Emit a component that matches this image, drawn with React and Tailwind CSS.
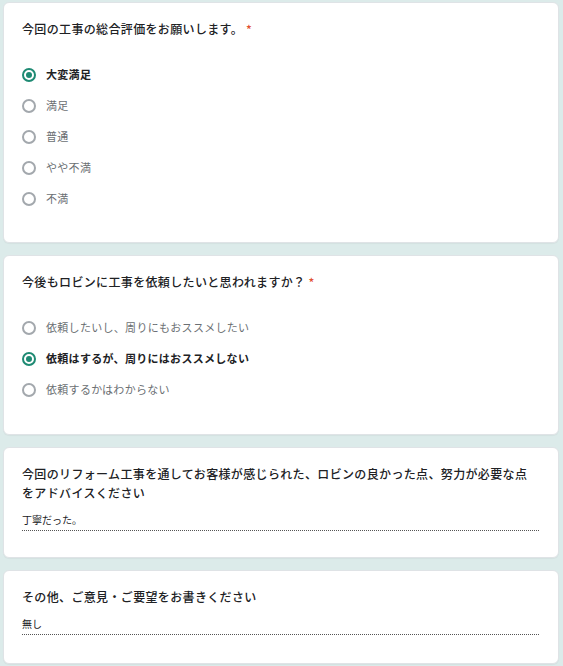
import React from 'react';

const font = { fontFamily: '"Noto Sans CJK JP", "Noto Sans", sans-serif' };

const Radio = ({ checked, label }) => (
  <div className="flex items-center h-[31px]">
    <span
      className={
        'w-[14px] h-[14px] rounded-full border-2 flex items-center justify-center shrink-0 ' +
        (checked ? 'border-[#1e8a73]' : 'border-[#a3a8ad]')
      }
    >
      {checked && <span className="w-[6px] h-[6px] rounded-full bg-[#1e8a73]" />}
    </span>
    <span
      className={
        'ml-[10px] text-[11px] tracking-[0.3px] ' +
        (checked ? 'font-bold text-[#202124]' : 'text-[#6b6f73]')
      }
    >
      {label}
    </span>
  </div>
);

const Card = ({ children, className = '' }) => (
  <div className={'bg-white border border-[#dfe3e6] rounded-[6px] pl-[18px] pr-[19px] pt-4 shadow-[0_1px_1px_rgba(0,0,0,0.04)] ' + className}>
    {children}
  </div>
);

const Title = ({ children, required }) => (
  <div className="text-[12px] leading-[19px] tracking-[0.35px] font-medium text-[#202124]">
    {children}
    {required && <span className="text-[#e2502f] ml-[3px]">*</span>}
  </div>
);

const Answer = ({ children }) => (
  <div className="mt-[10px] text-[10px] leading-[16px] text-[#202124] pb-[2px] border-b border-dotted border-[#555]">
    {children}
  </div>
);

export default function App() {
  const q1 = ['大変満足', '満足', '普通', 'やや不満', '不満'];
  const q2 = [
    '依頼したいし、周りにもおススメしたい',
    '依頼はするが、周りにはおススメしない',
    '依頼するかはわからない',
  ];

  return (
    <div className="min-h-[666px] bg-[#dcebea] pt-[2px] pl-[3px] pr-[4px] flex flex-col gap-[12px]" style={font}>
      <Card className="pb-[28px]">
        <Title required>今回の工事の総合評価をお願いします。</Title>
        <div className="mt-[21px]">
          {q1.map((l, i) => (
            <Radio key={l} label={l} checked={i === 0} />
          ))}
        </div>
      </Card>

      <Card className="pb-[29px]">
        <Title required>今後もロビンに工事を依頼したいと思われますか？</Title>
        <div className="mt-[21px]">
          {q2.map((l, i) => (
            <Radio key={l} label={l} checked={i === 1} />
          ))}
        </div>
      </Card>

      <Card className="pb-[26px]">
        <Title>今回のリフォーム工事を通してお客様が感じられた、ロビンの良かった点、努力が必要な点をアドバイスください</Title>
        <Answer>丁寧だった。</Answer>
      </Card>

      <Card className="pb-[28px]">
        <Title>その他、ご意見・ご要望をお書きください</Title>
        <Answer>無し</Answer>
      </Card>
    </div>
  );
}
